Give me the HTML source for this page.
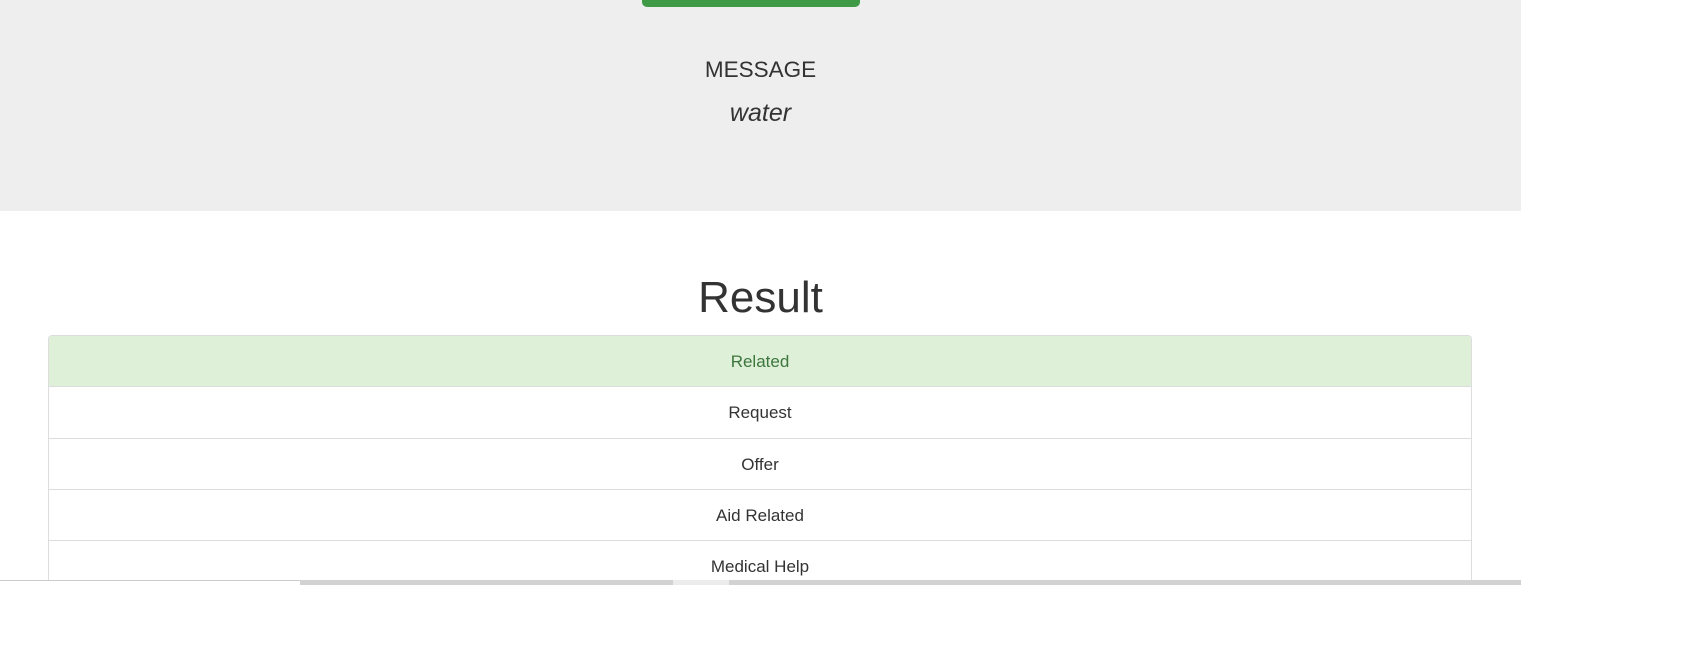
<!DOCTYPE html>
<html><head><meta charset="utf-8"><style>
*{margin:0;padding:0;box-sizing:border-box}
body{width:1691px;height:648px;background:#fff;font-family:"Liberation Sans",Arial,sans-serif;color:#333;position:relative;overflow:hidden}
.jumbo{position:absolute;left:0;top:0;width:1521px;height:211px;background:#eee}
.btn{position:absolute;left:642px;top:-10px;width:218px;height:17px;background:#3f9a45;border-radius:5px}
.msg{position:absolute;left:0;width:1521px;text-align:center}
h1{position:absolute;left:0;width:1521px;text-align:center;font-weight:normal;font-size:44px;top:270px;line-height:56px}
.list{position:absolute;left:48px;top:335px;width:1424px;height:245px;overflow:hidden;border:1px solid #ddd;border-bottom:none;border-radius:4px 4px 0 0}
.item{height:51.3px;line-height:51px;text-align:center;font-size:17px;border-bottom:1px solid #ddd;background:#fff}
.item.ok{background:#dff0d8;color:#3c763d}
.bar{position:absolute;top:580px;height:5px;background:#d2d2d2}
</style></head><body>
<div class="jumbo">
<div class="btn"></div>
<div class="msg" style="top:56px;font-size:22.5px;line-height:28px">MESSAGE</div>
<div class="msg" style="top:98px;font-size:25px;font-style:italic;line-height:30px">water</div>
</div>
<h1>Result</h1>
<div class="list">
<div class="item ok">Related</div>
<div class="item">Request</div>
<div class="item">Offer</div>
<div class="item">Aid Related</div>
<div class="item">Medical Help</div>
</div>
<div style="position:absolute;left:0;top:580px;width:300px;height:1px;background:#ccc"></div>
<div class="bar" style="left:300px;width:373px"></div>
<div class="bar" style="left:673px;width:56px;background:#ececec"></div>
<div class="bar" style="left:729px;width:792px"></div>
</body></html>
